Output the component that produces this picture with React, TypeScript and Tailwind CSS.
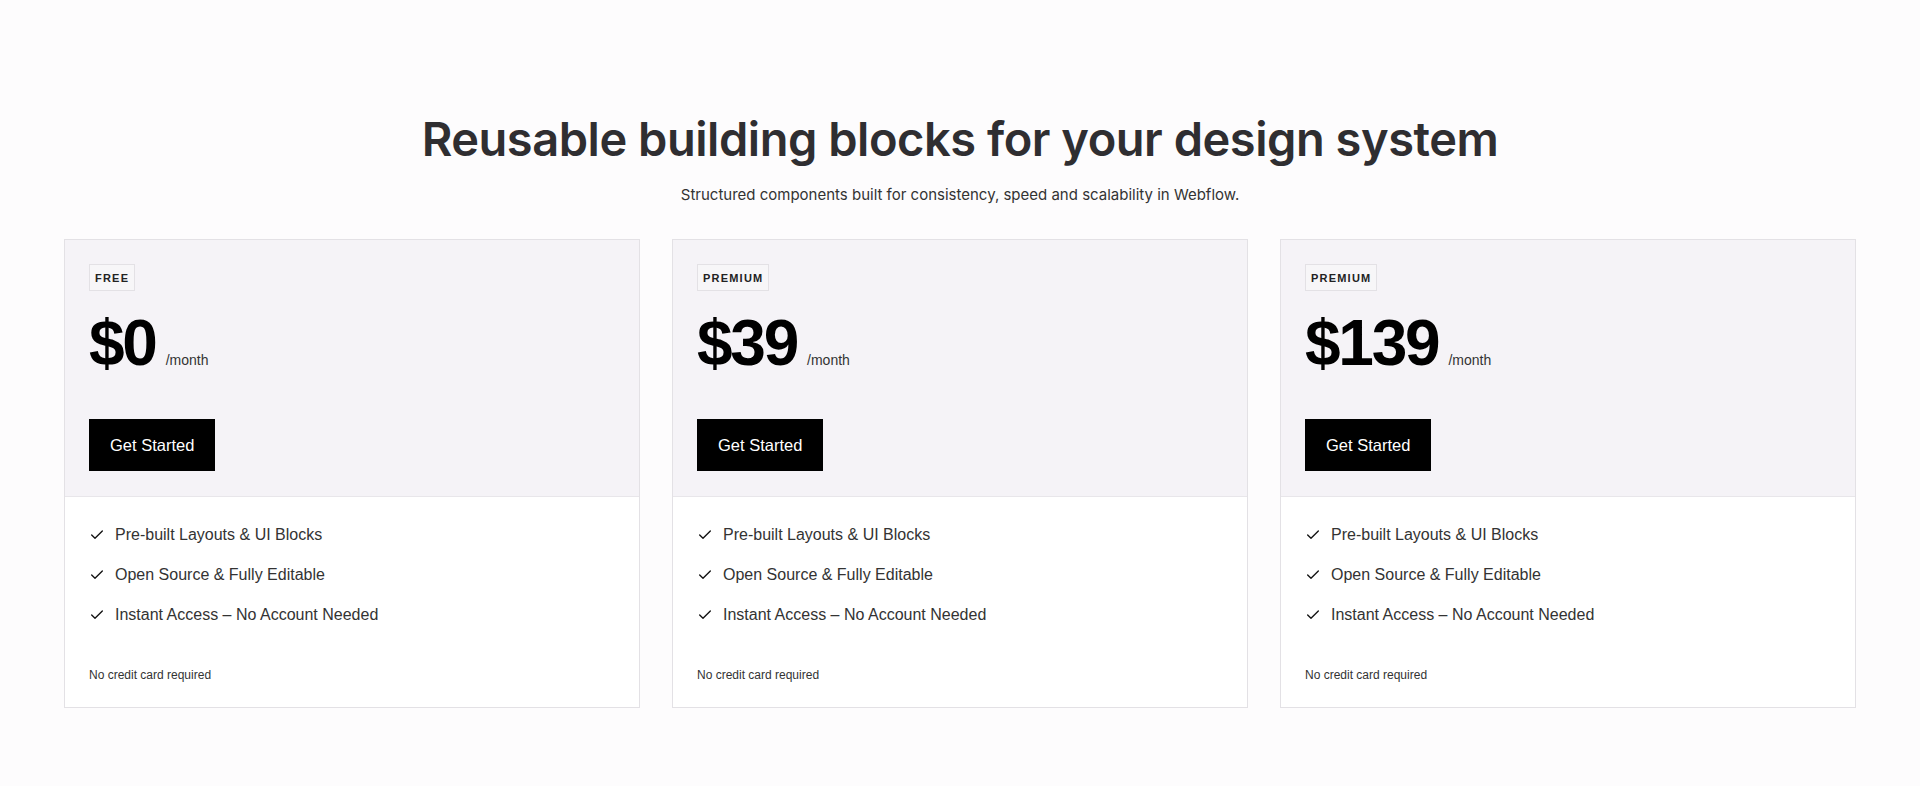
import { Check } from "lucide-react"

interface Plan {
  tag: string
  price: string
}

const plans: Plan[] = [
  { tag: "FREE", price: "$0" },
  { tag: "PREMIUM", price: "$39" },
  { tag: "PREMIUM", price: "$139" },
]

const features = [
  "Pre-built Layouts & UI Blocks",
  "Open Source & Fully Editable",
  "Instant Access – No Account Needed",
]

function PlanCard({ plan }: { plan: Plan }) {
  return (
    <div className="border border-[#e3e1e5] bg-white font-['Liberation_Sans',Arial,sans-serif]">
      <div className="bg-[#f5f3f7] border-b border-[#e8e6ea] px-6 pt-6 pb-[25px]">
        <div className="inline-flex h-[27px] items-center border border-[#e3e1e5] bg-[#f7f6f8] px-[5px] text-[11px] font-bold tracking-[0.11em] text-[#222]">
          {plan.tag}
        </div>
        <div className="mt-5 flex items-baseline">
          <span className="text-[64px] font-bold leading-none tracking-[-0.035em] text-black">
            {plan.price}
          </span>
          <span className="ml-[10px] text-sm text-[#333]">/month</span>
        </div>
        <button className="mt-[44px] h-[52px] bg-black px-[21px] text-[16.5px] text-white">
          Get Started
        </button>
      </div>
      <div className="px-6 pt-[26px] pb-6">
        <ul className="space-y-4">
          {features.map((f) => (
            <li key={f} className="flex items-center gap-[10px] text-base leading-6 text-[#333]">
              <Check size={16} strokeWidth={2} className="text-[#111]" />
              {f}
            </li>
          ))}
        </ul>
        <p className="mt-10 text-xs leading-4 text-[#333]">No credit card required</p>
      </div>
    </div>
  )
}

export default function App() {
  return (
    <div className="min-h-screen bg-[#fdfcfd] pt-[111px] pb-20">
      <div className="text-center font-['Inter',sans-serif]">
        <h1 className="text-[47px] font-semibold leading-[1.2] tracking-[-0.01em] text-[#2f2e31]">
          Reusable building blocks for your design system
        </h1>
        <p className="mt-[16px] text-[15px] leading-6 text-[#333]">
          Structured components built for consistency, speed and scalability in Webflow.
        </p>
      </div>
      <div className="mt-8 grid grid-cols-3 gap-8 px-16">
        {plans.map((p, i) => (
          <PlanCard key={i} plan={p} />
        ))}
      </div>
    </div>
  )
}
